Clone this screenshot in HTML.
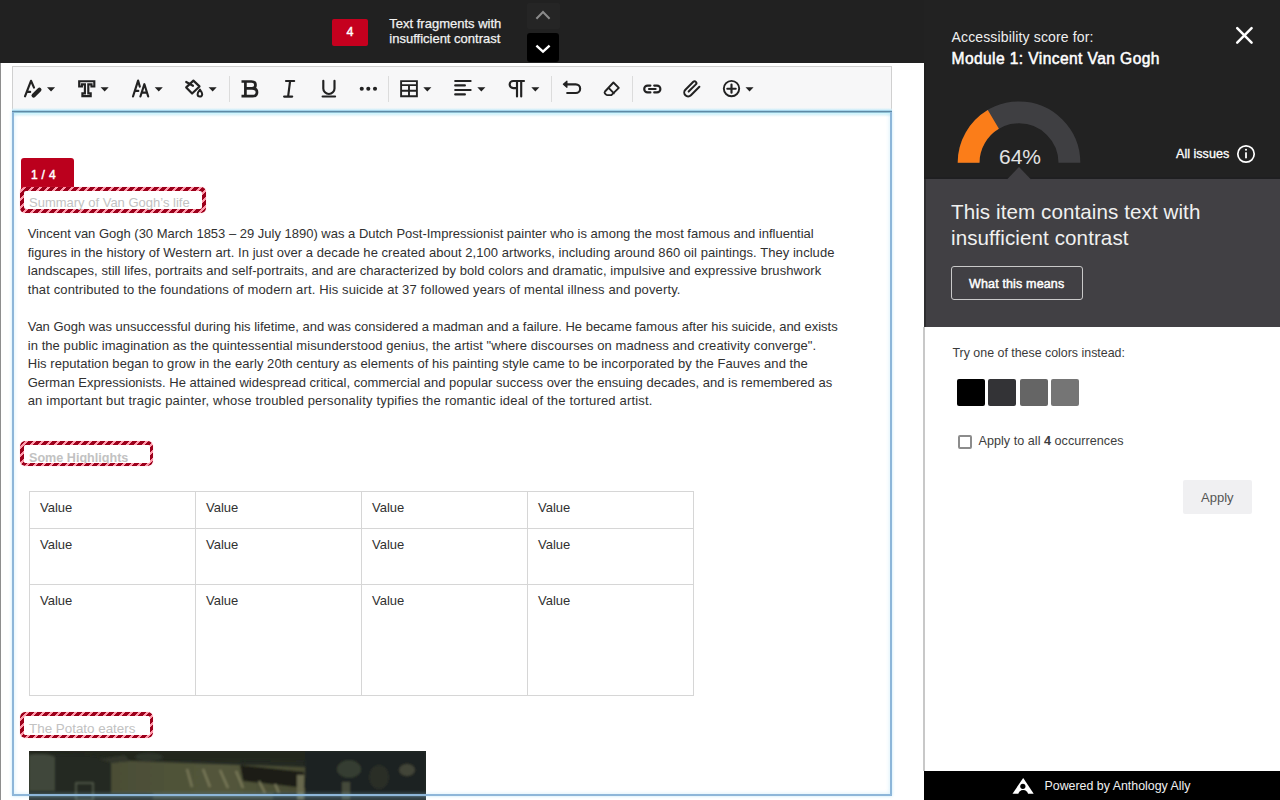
<!DOCTYPE html>
<html><head><meta charset="utf-8">
<style>
*{margin:0;padding:0;box-sizing:border-box}
html,body{width:1280px;height:800px;overflow:hidden;background:#fff;font-family:"Liberation Sans",sans-serif;position:relative}
.a{position:absolute}
#topbar{left:0;top:0;width:924px;height:63px;background:#212121}
#leftline{left:0;top:63px;width:1px;height:737px;background:#8e8e8e}
.badge4{left:332px;top:19px;width:36px;height:27px;background:#c5001e;border-radius:2px;color:#fff;font-size:12.5px;-webkit-text-stroke:0.4px #fff;text-align:center;line-height:27px}
.tf{left:389.3px;top:16px;color:#f2f2f2;font-size:13px;line-height:15px;white-space:nowrap;-webkit-text-stroke:0.25px #f2f2f2}
.upbtn{left:527px;top:3px;width:33px;height:26px;background:#252525;border-radius:2px}
.dnbtn{left:527px;top:33px;width:32px;height:29px;background:#000;border-radius:3px}
#toolbar{left:12px;top:66px;width:880px;height:46px;background:#f7f7f8;border:1px solid #d0d0d0;border-bottom:none}
#editor{left:12px;top:111px;width:880px;height:685px;border:2px solid #8db6d9;border-top:none;box-shadow:0 0 3px rgba(150,215,245,.6), inset 0 0 4px rgba(150,215,245,.45)}
.sep{width:1px;top:76px;height:26px;background:#dcdcdc}
.ic{top:80px;width:18px;height:18px;overflow:visible}
.car{top:87px;width:8px;height:4px}
#panel{left:924px;top:0;width:356px;height:800px;background:#fff}
#ptop{left:924px;top:0;width:356px;height:179px;background:#222222;box-shadow:inset 0 -2px 0 #1f1f21}
#pmid{left:924px;top:179px;width:356px;height:148px;background:#414044}
#pfoot{left:924px;top:771px;width:356px;height:29px;background:#000}
.nw{white-space:nowrap}
.body{left:27.7px;font-size:13px;color:#313131;line-height:18.6px;white-space:nowrap}
.hatch{border-radius:5px;box-shadow:0 0 1px rgba(255,140,160,.7);background:repeating-linear-gradient(-45deg,#9c001b 0,#9c001b 4.1px,#ff9aab 4.1px,#ff9aab 5.66px)}
.hin{position:absolute;left:4px;top:4px;right:4px;bottom:4px;background:#fff;border-radius:2px}
.hd{color:#c2c2c2;font-size:13px;white-space:nowrap;line-height:16px}
.val{font-size:13px;color:#313131;line-height:16px}
.tl{background:#d6d6d6}
</style></head><body>
<div class="a" id="topbar"></div>
<div class="a" id="leftline"></div>
<div class="a badge4">4</div>
<div class="a tf">Text fragments with<br>insufficient contrast</div>
<div class="a upbtn"><svg width="33" height="26" viewBox="0 0 33 26" style="display:block"><path d="M9.4 15.8 L16 9 L22.6 15.8" fill="none" stroke="#8a8a8a" stroke-width="2"/></svg></div>
<div class="a dnbtn"><svg width="32" height="29" viewBox="0 0 32 29" style="display:block"><path d="M9.4 12.6 L16 18.6 L22.6 12.6" fill="none" stroke="#fff" stroke-width="2.4"/></svg></div>

<div class="a" id="toolbar"></div>
<svg class="a" style="left:0;top:0" width="924" height="112" viewBox="0 0 924 112">
<g fill="none" stroke="#222" stroke-width="2.15" stroke-linecap="round" stroke-linejoin="round">
<path d="M25,96.3 L31,80.8 L34,87.6 M27.3,91.9 H30.2"/>
<path d="M33.6,95.6 L39.4,89.8" stroke-width="4.2"/>
<path d="M79.2,81.2 H94.3 V86.5 H91.5 V84.3 H88.3 V93.3 H90.7 V96.1 H82.4 V93.3 H84.9 V84.3 H81.9 V86.5 H79.2 Z" stroke-linecap="butt" stroke-linejoin="miter"/>
<path d="M133,96.5 L138.1,80.6 L139.8,86.6 M134.8,90.9 H138.3"/>
<path d="M140.4,96.5 L144.4,84.2 L148.2,96.5 M141.9,92.6 H146.8"/>
<path d="M193.4,80.6 L199.5,86.4 L192.1,93.6 L186.2,87.4 Z"/>
<path d="M186.2,82 L193,85.8"/>
<path d="M199.9,89.6 Q202.2,92.6 202.2,94.3 A2.3,2.3 0 0 1 197.6,94.3 Q197.6,92.6 199.9,89.6 Z" stroke-width="2"/>
<path d="M241.5,81.5 H251.5 Q255.5,81.5 255.5,85 Q255.5,88.3 252,88.3 H245.4 M252,88.3 Q257,88.3 257,92.2 Q257,96.2 252.5,96.2 H241.5 M245.4,81.5 V96.2" stroke-width="2.7" stroke-linecap="butt" stroke-linejoin="miter"/>
<path d="M286,81 H294.2 M284.1,96.6 H292.2 M290.1,81 L288.1,96.6"/>
<path d="M323.3,80.8 V88.4 A5.6,5.6 0 0 0 334.5,88.4 V80.8 M322.6,96.5 H335.1"/>
<path d="M401.1,81.1 H416.9 V96.2 H401.1 Z M401.1,85.1 H416.9 M401.1,90.8 H416.9 M409,85.1 V96.2" stroke-width="1.9" stroke-linejoin="miter"/>
<path d="M455.2,81.04 H470.6 M455.2,85.4 H464.9 M455.2,90 H470.6 M455.2,94.4 H464.9"/>
<path d="M521.2,96.5 V81 M517,96.5 V81 M524,81 H513.2 A3.55,3.55 0 0 0 513.2,88.1 H517"/>
<path d="M566.4,84.3 H575.8 A4.35,4.35 0 0 1 575.8,93 H567.2"/>
<path d="M563.4,84.25 L566.9,81.2 L566.9,87.3 Z" fill="#222" stroke-width="1.2"/>
<path d="M613.4,82.5 L618.8,87.9 L611.4,95.1 H607.6 Q606.6,95.1 605.8,94.3 L604.9,93.4 Q604.2,92.5 605,91.5 Z M609.1,88.4 L614,93.3" stroke-width="1.9"/>
<path d="M650.4,85.6 H647.6 A3.4,3.4 0 0 0 647.6,92.4 H650.4 M654.2,85.6 H657 A3.4,3.4 0 0 1 657,92.4 H654.2 M649,89 H655.6"/>
<path d="M688.65,91.57 L695.86,84.36 A1.8,1.8 0 0 0 693.32,81.81 L685.39,89.73 A3.9,3.9 0 0 0 690.91,95.25 L699.39,86.76" stroke-width="2"/>
<circle cx="731.5" cy="88.6" r="7.7" stroke-width="1.9"/>
<path d="M727.3,88.7 H735.7 M731.5,84.6 V92.7"/>
</g>
<path d="M47,87.2 h8.1 l-4.05,4.4 z M100.6,87.2 h8.1 l-4.05,4.4 z M154.7,87.2 h8.1 l-4.05,4.4 z M208.6,87.2 h8.1 l-4.05,4.4 z M423.3,87.2 h8.1 l-4.05,4.4 z M477.3,87.2 h8.1 l-4.05,4.4 z M531.3,87.2 h8.1 l-4.05,4.4 z M745.5,87.2 h8.1 l-4.05,4.4 z " fill="#222"/>
<g fill="#222"><circle cx="361.75" cy="88.75" r="2.05"/><circle cx="368.3" cy="88.75" r="2.05"/><circle cx="375" cy="88.75" r="2.05"/></g>
<g fill="#dcdcdc"><rect x="229" y="76" width="1" height="26"/><rect x="388" y="76" width="1" height="26"/><rect x="551" y="76" width="1" height="26"/><rect x="632" y="76" width="1" height="26"/></g>
</svg>


<!-- badge 1/4 -->
<div class="a" style="left:21px;top:158px;width:53px;height:32px;background:#bb001d;border-radius:3px 3px 0 0"></div>
<div class="a nw" style="left:31px;top:167.5px;color:#fff;font-size:12px;letter-spacing:0.3px;-webkit-text-stroke:0.45px #fff;line-height:14px">1 / 4</div>
<div class="a hatch" style="left:20px;top:187px;width:186px;height:26px"><div class="hin"></div></div>
<div class="a hd" style="left:29px;top:195px">Summary of Van Gogh’s life</div>

<div class="a body" style="top:225px">
<div style="letter-spacing:-0.005px">Vincent van Gogh (30 March 1853 – 29 July 1890) was a Dutch Post-Impressionist painter who is among the most famous and influential</div>
<div style="letter-spacing:0.046px">figures in the history of Western art. In just over a decade he created about 2,100 artworks, including around 860 oil paintings. They include</div>
<div style="letter-spacing:0.063px">landscapes, still lifes, portraits and self-portraits, and are characterized by bold colors and dramatic, impulsive and expressive brushwork</div>
<div style="letter-spacing:0.132px">that contributed to the foundations of modern art. His suicide at 37 followed years of mental illness and poverty.</div>
</div>
<div class="a body" style="top:318.1px">
<div style="letter-spacing:-0.004px">Van Gogh was unsuccessful during his lifetime, and was considered a madman and a failure. He became famous after his suicide, and exists</div>
<div style="letter-spacing:0.072px">in the public imagination as the quintessential misunderstood genius, the artist "where discourses on madness and creativity converge".</div>
<div style="letter-spacing:0.057px">His reputation began to grow in the early 20th century as elements of his painting style came to be incorporated by the Fauves and the</div>
<div style="letter-spacing:0.002px">German Expressionists. He attained widespread critical, commercial and popular success over the ensuing decades, and is remembered as</div>
<div style="letter-spacing:0.188px">an important but tragic painter, whose troubled personality typifies the romantic ideal of the tortured artist.</div>
</div>

<div class="a hd" style="left:29px;top:449.5px;font-weight:bold;font-size:12.6px">Some Highlights</div>
<div class="a hatch" style="left:20px;top:441px;width:133px;height:25px;background:transparent"><div style="position:absolute;inset:0;border-radius:5px;padding:3.5px;background:repeating-linear-gradient(-45deg,#9c001b 0,#9c001b 4.1px,#ff9aab 4.1px,#ff9aab 5.66px);-webkit-mask:linear-gradient(#000 0 0) content-box,linear-gradient(#000 0 0);-webkit-mask-composite:xor;mask-composite:exclude"></div></div>

<!-- table -->
<div class="a tl" style="left:29px;top:491px;width:665px;height:1px"></div>
<div class="a tl" style="left:29px;top:528px;width:665px;height:1px"></div>
<div class="a tl" style="left:29px;top:584px;width:665px;height:1px"></div>
<div class="a tl" style="left:29px;top:695px;width:665px;height:1px"></div>
<div class="a tl" style="left:29px;top:491px;width:1px;height:205px"></div>
<div class="a tl" style="left:195px;top:491px;width:1px;height:205px"></div>
<div class="a tl" style="left:361px;top:491px;width:1px;height:205px"></div>
<div class="a tl" style="left:527px;top:491px;width:1px;height:205px"></div>
<div class="a tl" style="left:693px;top:491px;width:1px;height:205px"></div>
<div class="a val" style="left:40px;top:500px">Value</div>
<div class="a val" style="left:206px;top:500px">Value</div>
<div class="a val" style="left:372px;top:500px">Value</div>
<div class="a val" style="left:538px;top:500px">Value</div>
<div class="a val" style="left:40px;top:537px">Value</div>
<div class="a val" style="left:206px;top:537px">Value</div>
<div class="a val" style="left:372px;top:537px">Value</div>
<div class="a val" style="left:538px;top:537px">Value</div>
<div class="a val" style="left:40px;top:593px">Value</div>
<div class="a val" style="left:206px;top:593px">Value</div>
<div class="a val" style="left:372px;top:593px">Value</div>
<div class="a val" style="left:538px;top:593px">Value</div>

<div class="a hd" style="left:29px;top:720.5px;font-size:13.4px">The Potato eaters</div>
<div class="a hatch" style="left:20px;top:712px;width:133px;height:26px;background:transparent"><div style="position:absolute;inset:0;border-radius:5px;padding:3.5px;background:repeating-linear-gradient(-45deg,#9c001b 0,#9c001b 4.1px,#ff9aab 4.1px,#ff9aab 5.66px);-webkit-mask:linear-gradient(#000 0 0) content-box,linear-gradient(#000 0 0);-webkit-mask-composite:xor;mask-composite:exclude"></div></div>

<!-- image -->
<div class="a" style="left:29px;top:751px;width:397px;height:49px;overflow:hidden;background:#23281f">
<svg class="a" style="left:0;top:0" width="397" height="49" viewBox="0 0 397 49">
<defs>
<linearGradient id="cg" x1="0" y1="0" x2="1" y2="0"><stop offset="0" stop-color="#4b4e36"/><stop offset=".6" stop-color="#53563b"/><stop offset="1" stop-color="#474a32"/></linearGradient>
<filter id="bl"><feGaussianBlur stdDeviation="1.2"/></filter>
</defs>
<rect width="397" height="49" fill="#242922"/>
<g filter="url(#bl)">
<path d="M0 4 Q14 0 26 6 L26 40 L0 40 Z" fill="#40463a"/>
<path d="M82 27 L82 12 L101 10 L276 16 L276 42 L82 42 Z" fill="url(#cg)"/>
<path d="M0 0 L397 0 L397 11 L230 9 L102 10 L60 4 L0 3 Z" fill="#21261f"/>
<path d="M82 12 L101 10 L96 4 L70 8 Z" fill="#30362c"/>
<path d="M211 14 L275 21 L276 37 L214 30 Z" fill="#1b1e19"/>
<g stroke="#858462" stroke-width="2.2" opacity=".75"><path d="M158 18 L163 36 M174 18 L181 36 M191 19 L199 37 M207 20 L214 37 M230 30 L236 42 M246 33 L250 42"/></g>
<rect x="268" y="24" width="7" height="25" fill="#67684e"/>
<rect x="276" y="0" width="121" height="49" fill="#1f2420"/>
<ellipse cx="120" cy="6" rx="14" ry="4" fill="#2f352c"/>
<g fill="#3a4235" opacity=".8"><ellipse cx="320" cy="18" rx="12" ry="9"/><ellipse cx="378" cy="19" rx="8" ry="6" fill="#4c4d40"/><ellipse cx="350" cy="26" rx="10" ry="12" fill="#2c322b"/></g>
<rect x="313" y="31" width="8" height="18" fill="#454a3a"/>
<rect x="47" y="32" width="17" height="17" fill="none" stroke="#5a6250" stroke-width="1.5"/>
<rect x="124" y="42" width="120" height="7" fill="#3e4030"/>
</g>
<rect x="0" y="43" width="397" height="6" fill="#6a90a8" opacity=".25"/>
</svg>
</div>
<div class="a" style="left:12px;top:108px;width:880px;height:9px;background:linear-gradient(180deg,rgba(215,240,252,0) 0px,#d6f0fb 2px,#a9d3e8 2px,#a9d3e8 3px,#5f8aa5 3px,#5f8aa5 4px,#8ebdd0 4px,#8ebdd0 5px,#d6f7fd 5px,#d6f7fd 6px,#e4f4fa 7px,rgba(240,248,252,0) 9px)"></div>
<div class="a" id="editor"></div>
<div class="a" style="left:12px;top:111px;width:880px;height:1px;background:#5f8aa5"></div>

<!-- right panel -->
<div class="a" id="panel"></div>
<div class="a" id="ptop"></div>
<div class="a" id="pmid"></div>
<div class="a" id="pfoot"></div>
<div class="a" style="left:924px;top:63px;width:1.5px;height:264px;background:#1c1c1c;opacity:.5"></div>
<div class="a" style="left:923.3px;top:327px;width:1.6px;height:444px;background:#c8c8c8"></div>

<div class="a nw" style="left:951.5px;top:29px;color:#f0f0f0;font-size:14px;letter-spacing:0.15px;line-height:16px">Accessibility score for:</div>
<div class="a nw" style="left:951.5px;top:49.5px;color:#fff;font-size:15.6px;letter-spacing:0.4px;-webkit-text-stroke:0.5px #fff;line-height:18px">Module 1: Vincent Van Gogh</div>
<svg class="a" style="left:1230px;top:21px" width="30" height="30" viewBox="0 0 30 30"><path d="M7.2 7.2 L21.6 21.6 M21.6 7.2 L7.2 21.6" stroke="#fff" stroke-width="2.5" stroke-linecap="round"/></svg>

<svg class="a" style="left:950px;top:95px" width="140" height="75" viewBox="0 0 140 75">
<path d="M18.6 67.8 A50.4 50.4 0 0 1 119.4 67.8" fill="none" stroke="#3f3f42" stroke-width="21.8"/>
<path d="M18.6 67.8 A50.4 50.4 0 0 1 43.34 24.42" fill="none" stroke="#fb7d19" stroke-width="21.8"/>
</svg>
<div class="a nw" style="left:999px;top:144.5px;color:#e2e2e2;font-size:21px;line-height:24px">64%</div>
<svg class="a" style="left:1006px;top:166px" width="26" height="14" viewBox="0 0 26 14"><path d="M0.5 14 L13 1 L25.5 14 Z" fill="#414044"/></svg>

<div class="a nw" style="left:1176px;top:147px;color:#fff;font-size:12.6px;-webkit-text-stroke:0.3px #fff;line-height:14px">All issues</div>
<svg class="a" style="left:1236px;top:144px" width="20" height="20" viewBox="0 0 20 20"><circle cx="10" cy="10" r="8.2" fill="none" stroke="#fff" stroke-width="1.7"/><rect x="9.1" y="8.3" width="1.8" height="6" fill="#fff"/><circle cx="10" cy="5.8" r="1.05" fill="#fff"/></svg>

<div class="a nw" style="left:951px;top:199px;color:#f0f0f0;font-size:20.6px;letter-spacing:0.08px;line-height:26px">This item contains text with<br>insufficient contrast</div>
<div class="a" style="left:951px;top:266px;width:132px;height:34px;border:1.5px solid #c9c9c9;border-radius:3px"></div>
<div class="a nw" style="left:969px;top:277px;color:#fff;font-size:12.5px;letter-spacing:0.15px;-webkit-text-stroke:0.45px #fff;line-height:14px">What this means</div>

<div class="a nw" style="left:952.5px;top:346px;color:#3a3a3a;font-size:12.4px;line-height:14px">Try one of these colors instead:</div>
<div class="a" style="left:957px;top:379px;width:28px;height:27px;background:#000;border-radius:2px"></div>
<div class="a" style="left:988px;top:379px;width:28px;height:27px;background:#333336;border-radius:2px"></div>
<div class="a" style="left:1019.5px;top:379px;width:28px;height:27px;background:#656565;border-radius:2px"></div>
<div class="a" style="left:1050.5px;top:379px;width:28px;height:27px;background:#757575;border-radius:2px"></div>

<div class="a" style="left:957.5px;top:435px;width:14px;height:13.5px;border:2px solid #8c8c8c;border-radius:2px"></div>
<div class="a nw" style="left:978.5px;top:434px;color:#3d3d3d;font-size:12.6px;letter-spacing:0.03px;line-height:14px">Apply to all <b>4</b> occurrences</div>

<div class="a" style="left:1183px;top:480px;width:69px;height:34px;background:#f0f0f2;border-radius:2px"></div>
<div class="a nw" style="left:1201px;top:491px;color:#555;font-size:13px;line-height:14px">Apply</div>

<svg class="a" style="left:1012px;top:777px" width="23" height="19" viewBox="0 0 23 19"><path d="M11.2 1 L21.7 16.7 L0.5 16.7 Z" fill="#fff"/><circle cx="10.85" cy="9.35" r="2.6" fill="#000"/><circle cx="11.2" cy="18.1" r="5" fill="#000"/></svg>
<div class="a nw" style="left:1044.5px;top:779px;color:#f0f0f0;font-size:12.4px;line-height:14px">Powered by Anthology Ally</div>

</body></html>
